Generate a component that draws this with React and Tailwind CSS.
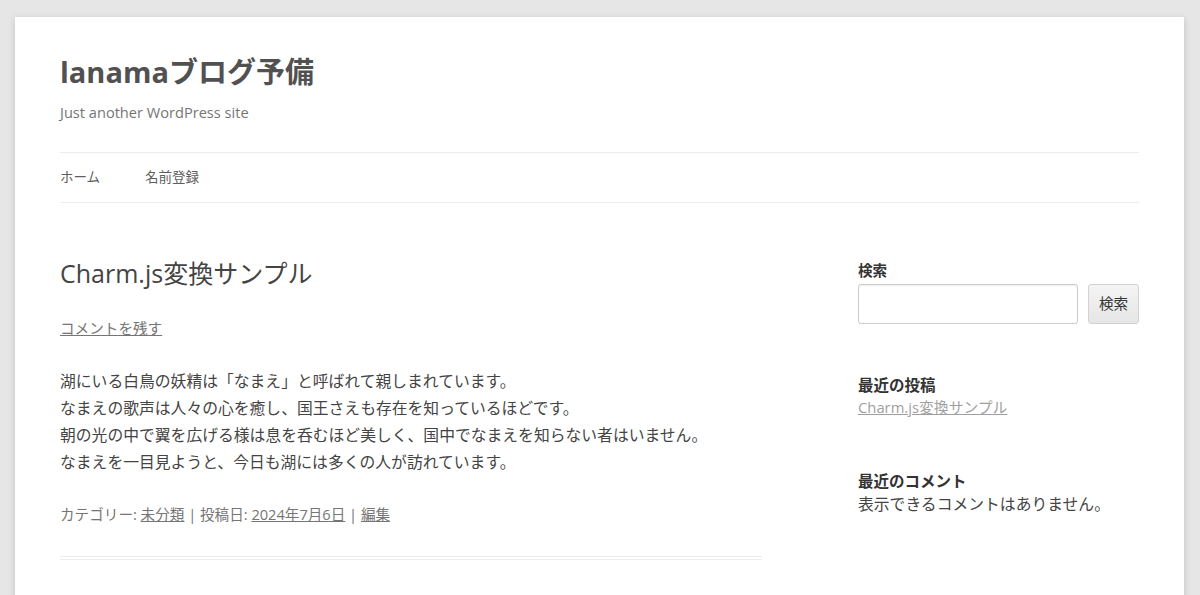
import React from 'react';

const FONT = { fontFamily: "'Open Sans', 'Noto Sans CJK JP', sans-serif" };

const BODY_LINES = [
  '湖にいる白鳥の妖精は「なまえ」と呼ばれて親しまれています。',
  'なまえの歌声は人々の心を癒し、国王さえも存在を知っているほどです。',
  '朝の光の中で翼を広げる様は息を呑むほど美しく、国中でなまえを知らない者はいません。',
  'なまえを一目見ようと、今日も湖には多くの人が訪れています。',
];

export default function App() {
  return (
    <div className="min-h-[595px] bg-[#e6e6e6] pt-[17px] overflow-hidden" style={FONT}>
      <div className="w-[1169px] ml-[15px] bg-white px-[45px] pb-[40px] shadow-[0_2px_6px_rgba(100,100,100,0.3)]">
        {/* header */}
        <header className="pt-[37px]">
          <h1 className="text-[29px] leading-[36px] font-bold text-[#515151]">lanamaブログ予備</h1>
          <p className="mt-[10px] text-[14.6px] leading-[24px] text-[#757575]">Just another WordPress site</p>
        </header>

        <nav className="mt-[28px] border-t border-b border-[#ededed] h-[51px] flex items-center gap-[45px] text-[13.5px] text-[#5e5e5e]">
          <span>ホーム</span>
          <span>名前登録</span>
        </nav>

        <div className="flex justify-between">
          {/* main */}
          <main className="w-[702px]">
            <article className="pt-[54px] pb-[30px] border-b-4 border-double border-[#ededed]">
              <h2 className="text-[25px] leading-[32px] font-normal text-[#444]">Charm.js変換サンプル</h2>
              <div className="mt-[27px] text-[14.6px] leading-[24px]">
                <a className="text-[#757575] underline">コメントを残す</a>
              </div>
              <div className="mt-[28px] text-[15.8px] leading-[27px] text-[#444]">
                {BODY_LINES.map((l) => (
                  <div key={l}>{l}</div>
                ))}
              </div>
              <footer className="mt-[26px] text-[14.6px] leading-[24px] text-[#757575]">
                カテゴリー: <a className="underline">未分類</a> | 投稿日: <a className="underline">2024年7月6日</a> | <a className="underline">編集</a>
              </footer>
            </article>
          </main>

          {/* sidebar */}
          <aside className="w-[281px] pt-[55px]">
            <section>
              <h3 className="text-[14.6px] leading-[24px] font-bold text-[#333]">検索</h3>
              <div className="flex gap-[10px] mt-[2px]">
                <input
                  type="text"
                  className="w-[220px] h-[40px] border border-[#ccc] rounded-[3px] shadow-[inset_0_1px_2px_rgba(0,0,0,0.07)] outline-none"
                />
                <button className="flex-1 h-[40px] border border-[#d2d2d2] rounded-[3px] bg-gradient-to-b from-[#f4f4f4] to-[#e6e6e6] text-[14.6px] text-[#333]">
                  検索
                </button>
              </div>
            </section>

            <section className="mt-[49px]">
              <h3 className="text-[15.5px] leading-[24px] font-bold text-[#333]">最近の投稿</h3>
              <a className="block text-[14.8px] leading-[20px] text-[#9f9f9f] underline">Charm.js変換サンプル</a>
            </section>

            <section className="mt-[52px]">
              <h3 className="text-[15.5px] leading-[24px] font-bold text-[#333]">最近のコメント</h3>
              <p className="text-[15.8px] leading-[22px] text-[#444]">表示できるコメントはありません。</p>
            </section>
          </aside>
        </div>
      </div>
    </div>
  );
}
